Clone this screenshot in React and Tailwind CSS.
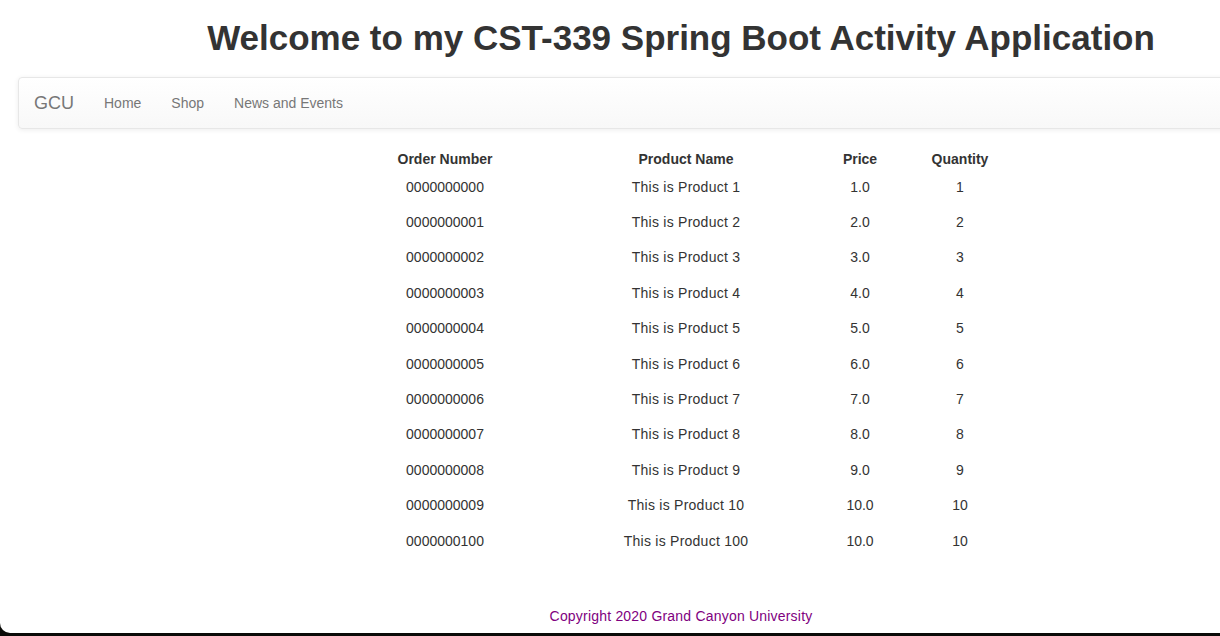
export default function App() {
  const rows = [
    ["0000000000", "This is Product 1", "1.0", "1"],
    ["0000000001", "This is Product 2", "2.0", "2"],
    ["0000000002", "This is Product 3", "3.0", "3"],
    ["0000000003", "This is Product 4", "4.0", "4"],
    ["0000000004", "This is Product 5", "5.0", "5"],
    ["0000000005", "This is Product 6", "6.0", "6"],
    ["0000000006", "This is Product 7", "7.0", "7"],
    ["0000000007", "This is Product 8", "8.0", "8"],
    ["0000000008", "This is Product 9", "9.0", "9"],
    ["0000000009", "This is Product 10", "10.0", "10"],
    ["0000000100", "This is Product 100", "10.0", "10"],
  ];
  const cols = "grid grid-cols-[230px_252px_96px_104px] w-[682px]";
  return (
    <div className="w-[1220px] h-[636px] bg-[#0b0b08] overflow-hidden" style={{ fontFamily: '"Liberation Sans", Arial, sans-serif' }}>
      <div className="h-[633px] bg-white rounded-bl-[10px] overflow-hidden text-[#333]">
        <div className="w-[1362px]">
          <h1 className="pt-[18px] text-center text-[35px] leading-[40px] font-bold text-[#333]">
            Welcome to my CST-339 Spring Boot Activity Application
          </h1>
          <nav className="mt-[19px] ml-[18px] w-[1326px] h-[52px] border border-[#e7e7e7] rounded-[4px] bg-gradient-to-b from-white to-[#f8f8f8] shadow-[inset_0_1px_0_rgba(255,255,255,0.15),0_1px_5px_rgba(0,0,0,0.075)] flex items-center">
            <span className="ml-[15px] text-[18px] text-[#777]">GCU</span>
            <span className="ml-[30px] text-[14px] text-[#777]">Home</span>
            <span className="ml-[30px] text-[14px] text-[#777]">Shop</span>
            <span className="ml-[30px] text-[14px] text-[#777]">News and Events</span>
          </nav>
          <div className="ml-[330px] mt-[20px] text-[14px]">
            <div className={cols + " h-[20.5px] items-center font-bold text-center"}>
              <div>Order Number</div>
              <div>Product Name</div>
              <div>Price</div>
              <div>Quantity</div>
            </div>
            {rows.map((r) => (
              <div key={r[0]} className={cols + " h-[35.4px] items-center text-center"}>
                <div>{r[0]}</div>
                <div className="tracking-[0.25px]">{r[1]}</div>
                <div>{r[2]}</div>
                <div>{r[3]}</div>
              </div>
            ))}
          </div>
          <div className="mt-[47px] text-center text-[14px] tracking-[0.2px] text-[#800080]">
            Copyright 2020 Grand Canyon University
          </div>
        </div>
      </div>
    </div>
  );
}
